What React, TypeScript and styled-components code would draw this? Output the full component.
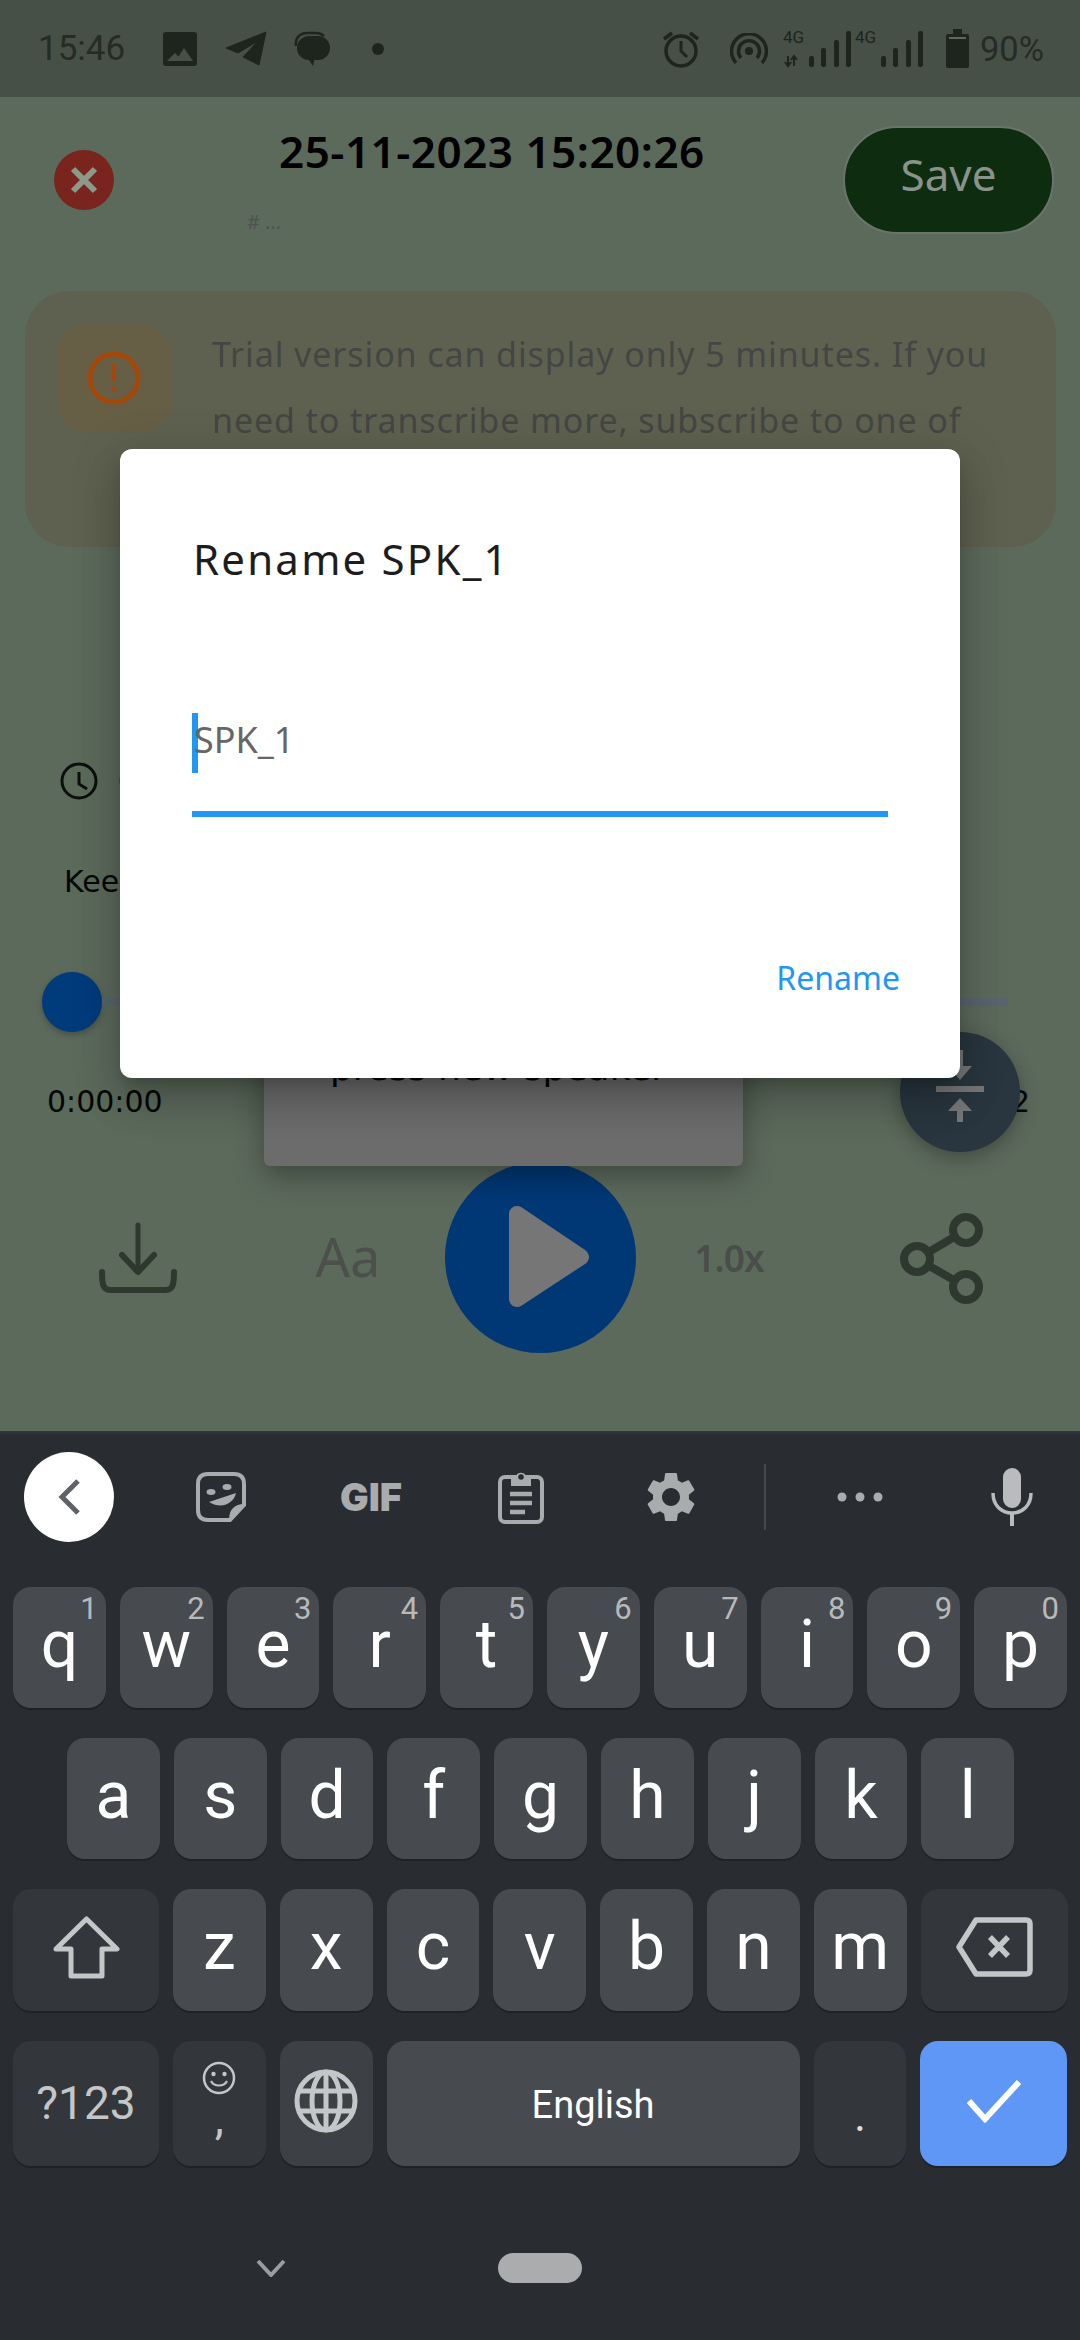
import React from 'react';
import { MdSettings } from 'react-icons/md';
import styled, { createGlobalStyle } from 'styled-components';

const APP_FONT = '"Noto Sans", "Open Sans", sans-serif';
const SYSTEM_FONT = 'Roboto, "Noto Sans", sans-serif';
const PLAIN_FONT = '"DejaVu Sans", sans-serif';
const STATUS_INK = '#1e241e';
const TOOL_INK = '#a9abad';
const KEY_INK = '#c5c6c7';
const CONTROL_INK = '#2f382f';

const ROW_ONE: [string, string][] = [
  ['q', '1'],
  ['w', '2'],
  ['e', '3'],
  ['r', '4'],
  ['t', '5'],
  ['y', '6'],
  ['u', '7'],
  ['i', '8'],
  ['o', '9'],
  ['p', '0'],
];
const ROW_TWO = ['a', 's', 'd', 'f', 'g', 'h', 'j', 'k', 'l'];
const ROW_THREE = ['z', 'x', 'c', 'v', 'b', 'n', 'm'];

function CellSignal({ activity }: { activity?: boolean }) {
  return (
    <svg width="70" height="42" viewBox="0 0 70 42">
      <text x="1" y="15" fontFamily="Roboto, sans-serif" fontSize="17" fill={STATUS_INK}>
        4G
      </text>
      {activity && (
        <path d="M6 28v9M3 34l3 4 3-4M12 38v-9M9 32l3-4 3 4" stroke={STATUS_INK} strokeWidth="2" fill="none" />
      )}
      <rect x="27" y="28" width="5" height="11" rx="2" fill={STATUS_INK} />
      <rect x="39" y="20" width="5" height="19" rx="2" fill={STATUS_INK} />
      <rect x="52" y="12" width="5" height="27" rx="2" fill={STATUS_INK} />
      <rect x="64" y="3" width="5" height="36" rx="2" fill={STATUS_INK} />
    </svg>
  );
}

export default function App(): JSX.Element {
  return (
    <Screen>
      <GlobalStyle />
      <StatusBar>
        <StatusGroup>
          <Clock>15:46</Clock>
          <svg width="34" height="34" viewBox="0 0 34 34" style={{ marginLeft: 38 }}>
            <rect width="34" height="34" rx="3" fill={STATUS_INK} />
            <path d="M4 29l8-8 3.5 3.5L21 16l9 13z" fill="#475047" />
          </svg>
          <svg width="42" height="35" viewBox="0 0 42 35" style={{ marginLeft: 28 }}>
            <path d="M41 1L1 17l12 5 20-12-15 16 16 8z" fill={STATUS_INK} stroke={STATUS_INK} strokeLinejoin="round" />
          </svg>
          <svg width="36" height="35" viewBox="0 0 36 35" style={{ marginLeft: 27 }}>
            <path d="M2 15C1 6 6 2 14 2h8c3 0 6 1 8 3" fill="none" stroke={STATUS_INK} strokeWidth="2.5" />
            <rect x="3" y="5" width="33" height="24" rx="12" fill={STATUS_INK} />
            <path d="M13 26l6 9 2-9z" fill={STATUS_INK} />
          </svg>
          <StatusDot />
        </StatusGroup>
        <StatusGroup>
          <svg width="38" height="38" viewBox="0 0 38 38">
            <circle cx="19" cy="21" r="15" fill="none" stroke={STATUS_INK} strokeWidth="3.5" />
            <path d="M19 11v10l6 6" fill="none" stroke={STATUS_INK} strokeWidth="3" />
            <path d="M2 9l8-6M36 9l-8-6" fill="none" stroke={STATUS_INK} strokeWidth="3.5" />
          </svg>
          <svg width="38" height="31" viewBox="0 0 38 31" style={{ marginLeft: 30 }}>
            <circle cx="19" cy="18" r="4" fill={STATUS_INK} />
            <path d="M11 25a10.500 10.500 0 1 1 16 0" fill="none" stroke={STATUS_INK} strokeWidth="3.500" />
            <path d="M6 30a17.500 17.500 0 1 1 26 0" fill="none" stroke={STATUS_INK} strokeWidth="3.500" />
          </svg>
          <SignalSlot $gap={14}>
            <CellSignal activity />
          </SignalSlot>
          <SignalSlot $gap={2}>
            <CellSignal />
          </SignalSlot>
          <svg width="23" height="39" viewBox="0 0 23 39" style={{ marginLeft: 22 }}>
            <path d="M7 0h9v5h5a2 2 0 0 1 2 2v30a2 2 0 0 1-2 2H2a2 2 0 0 1-2-2V7a2 2 0 0 1 2-2h5z" fill={STATUS_INK} />
            <rect x="3" y="8" width="17" height="2" fill="#5f685f" />
          </svg>
          <Battery>90%</Battery>
        </StatusGroup>
      </StatusBar>

      <Body>
        <Header>
          <CloseButton>
            <svg width="28" height="28" viewBox="0 0 28 28">
              <path d="M3 3l22 22M25 3L3 25" stroke="#8b9a8c" strokeWidth="6" />
            </svg>
          </CloseButton>
          <TitleColumn>
            <Title>25-11-2023 15:20:26</Title>
            <Subtitle># ...</Subtitle>
          </TitleColumn>
          <SaveButton>Save</SaveButton>
        </Header>

        <TrialCard>
          <TrialIcon>
            <svg width="54" height="54" viewBox="0 0 54 54">
              <circle cx="27" cy="27" r="24" fill="none" stroke="#a3480a" strokeWidth="5" />
              <path d="M27 13v17" stroke="#a3480a" strokeWidth="4" />
              <circle cx="27" cy="38" r="2.500" fill="#a3480a" />
            </svg>
          </TrialIcon>
          <TrialText>
            Trial version can display only 5 minutes. If you
            <br />
            need to transcribe more, subscribe to one of
          </TrialText>
        </TrialCard>

        <ClockRow>
          <svg width="38" height="38" viewBox="0 0 38 38">
            <circle cx="19" cy="19" r="17" fill="none" stroke="#0c0f0c" strokeWidth="3" />
            <path d="M19 10v12l8 5" fill="none" stroke="#0c0f0c" strokeWidth="3" />
          </svg>
          <ClockLabel>C</ClockLabel>
        </ClockRow>
        <KeepLine>Kee</KeepLine>

        <SliderRow>
          <SliderThumb />
          <SliderTrack />
        </SliderRow>
        <TimeRow>
          <span>0:00:00</span>
          <span>2</span>
        </TimeRow>

        <Controls>
          <ControlSlot>
            <svg width="80" height="72" viewBox="0 0 80 72">
              <path d="M40 3v45" fill="none" stroke={CONTROL_INK} strokeWidth="5" strokeLinecap="round" />
              <path d="M24 33l16 17 16-17" fill="none" stroke={CONTROL_INK} strokeWidth="6" strokeLinecap="round" strokeLinejoin="round" />
              <path d="M4 50c0 12 1 18 8 18h56c7 0 8-6 8-18" fill="none" stroke={CONTROL_INK} strokeWidth="6" strokeLinecap="round" />
            </svg>
          </ControlSlot>
          <ControlSlot>
            <FontLabel>Aa</FontLabel>
          </ControlSlot>
          <ControlSlot>
            <PlayButton>
              <svg width="191" height="191" viewBox="0 0 191 191">
                <path d="M72 52l64 43-64 42z" fill="#767676" stroke="#767676" strokeWidth="16" strokeLinejoin="round" />
              </svg>
            </PlayButton>
          </ControlSlot>
          <ControlSlot>
            <SpeedLabel>1.0x</SpeedLabel>
          </ControlSlot>
          <ControlSlot>
            <svg width="84" height="92" viewBox="0 0 84 92">
              <path d="M66 18L17 47l49 28" fill="none" stroke={CONTROL_INK} strokeWidth="8" />
              <circle cx="66" cy="18" r="13" fill="#5c6a5c" stroke={CONTROL_INK} strokeWidth="8" />
              <circle cx="17" cy="47" r="13" fill="#5c6a5c" stroke={CONTROL_INK} strokeWidth="8" />
              <circle cx="66" cy="75" r="13" fill="#5c6a5c" stroke={CONTROL_INK} strokeWidth="8" />
            </svg>
          </ControlSlot>
        </Controls>

        <MergeFab>
          <svg width="48" height="84" viewBox="0 0 48 84">
            <path d="M21 0h6v16h9L24 30 12 16h9z" fill="#777" />
            <rect y="36" width="48" height="6" fill="#777" />
            <path d="M24 48l12 13h-9v11h-6V61h-9z" fill="#777" />
          </svg>
        </MergeFab>

        <Toast>press new speaker</Toast>

        <Dialog>
          <DialogTitle>Rename SPK_1</DialogTitle>
          <Field>
            <Caret />
            <FieldValue>SPK_1</FieldValue>
          </Field>
          <DialogAction>Rename</DialogAction>
        </Dialog>
      </Body>

      <Keyboard>
        <Toolbar>
          <BackButton>
            <svg width="24" height="36" viewBox="0 0 24 36">
              <path d="M21 2L5 18l16 16" fill="none" stroke="#5f6368" strokeWidth="5" />
            </svg>
          </BackButton>
          <ToolSlot $first>
            <svg width="50" height="50" viewBox="0 0 50 50">
              <path d="M12 2h26q10 0 10 10v21L34 48H12Q2 48 2 38V12Q2 2 12 2z" fill="none" stroke={TOOL_INK} strokeWidth="4" />
              <path d="M48 32c-9 0-15 5-15 16z" fill={TOOL_INK} />
              <ellipse cx="15" cy="20" rx="4.500" ry="3" fill={TOOL_INK} />
              <ellipse cx="31" cy="15" rx="4.500" ry="3" fill={TOOL_INK} />
              <path d="M13 30l27-9c-2 10-14 17-27 9z" fill={TOOL_INK} />
            </svg>
          </ToolSlot>
          <ToolSlot>
            <GifLabel>GIF</GifLabel>
          </ToolSlot>
          <ToolSlot>
            <svg width="46" height="54" viewBox="0 0 46 54">
              <rect x="2" y="7" width="42" height="45" rx="5" fill="none" stroke={TOOL_INK} strokeWidth="4" />
              <path d="M13 6h5a5.500 5.500 0 0 1 10 0h5v10H13z" fill={TOOL_INK} />
              <circle cx="23" cy="7" r="2.800" fill="#292d31" />
              <path d="M12 24h22M12 33h22M12 42h15" stroke={TOOL_INK} strokeWidth="4.500" />
            </svg>
          </ToolSlot>
          <ToolSlot>
            <MdSettings size={60} color={TOOL_INK} />
          </ToolSlot>
          <ToolDivider />
          <ToolEnd>
            <svg width="46" height="10" viewBox="0 0 46 10">
              <circle cx="5" cy="5" r="4.500" fill={TOOL_INK} />
              <circle cx="23" cy="5" r="4.500" fill={TOOL_INK} />
              <circle cx="41" cy="5" r="4.500" fill={TOOL_INK} />
            </svg>
          </ToolEnd>
          <ToolEnd>
            <svg width="42" height="58" viewBox="0 0 42 58">
              <rect x="12" y="0" width="18" height="40" rx="9" fill="#b9bbbd" />
              <path d="M2 25c0 12 8 20 19 20s19-8 19-20" fill="none" stroke="#b9bbbd" strokeWidth="3.500" />
              <path d="M21 45v13" stroke="#b9bbbd" strokeWidth="4" />
            </svg>
          </ToolEnd>
        </Toolbar>

        <KeyRows>
          <KeyRow $height={121}>
            {ROW_ONE.map(([letter, digit]) => (
              <Key key={letter}>
                {letter}
                <KeyHint>{digit}</KeyHint>
              </Key>
            ))}
          </KeyRow>
          <KeyRow $height={121} $inset={54}>
            {ROW_TWO.map((letter) => (
              <Key key={letter}>{letter}</Key>
            ))}
          </KeyRow>
          <KeyRow $height={122}>
            <Key $width={146} $tone="dark">
              <svg width="67" height="63" viewBox="0 0 67 63">
                <path d="M33.500 3L64 33H49v27H18V33H3z" fill="none" stroke={KEY_INK} strokeWidth="5" strokeLinejoin="round" />
              </svg>
            </Key>
            {ROW_THREE.map((letter) => (
              <Key key={letter}>{letter}</Key>
            ))}
            <Key $width={147} $tone="dark">
              <svg width="77" height="60" viewBox="0 0 77 60">
                <path d="M20 3h50q4 0 4 4v46q0 4-4 4H20L3 30z" fill="none" stroke={KEY_INK} strokeWidth="5.500" strokeLinejoin="round" />
                <path d="M34 20l18 19M52 20L34 39" stroke={KEY_INK} strokeWidth="5.500" />
              </svg>
            </Key>
          </KeyRow>
          <KeyRow $height={125}>
            <Key $width={146} $tone="dark">
              <SymbolsLabel>?123</SymbolsLabel>
            </Key>
            <Key $tone="dark">
              <CommaStack>
                <svg width="34" height="34" viewBox="0 0 34 34">
                  <circle cx="17" cy="17" r="15" fill="none" stroke={KEY_INK} strokeWidth="2.500" />
                  <circle cx="11.500" cy="13" r="2.200" fill={KEY_INK} />
                  <circle cx="22.500" cy="13" r="2.200" fill={KEY_INK} />
                  <path d="M9 20c3 6 13 6 16 0" fill="none" stroke={KEY_INK} strokeWidth="2.200" />
                </svg>
                <CommaMark>,</CommaMark>
              </CommaStack>
            </Key>
            <Key $tone="mid">
              <svg width="64" height="64" viewBox="0 0 64 64">
                <g fill="none" stroke={KEY_INK} strokeWidth="5">
                  <circle cx="32" cy="32" r="29" />
                  <ellipse cx="32" cy="32" rx="14" ry="29" />
                  <path d="M5 22h54M5 42h54M32 3v58" />
                </g>
              </svg>
            </Key>
            <Key $width={413}>
              <SpaceLabel>English</SpaceLabel>
            </Key>
            <Key $tone="dark">
              <PeriodMark>.</PeriodMark>
            </Key>
            <Key $width={147} $tone="accent">
              <svg width="56" height="44" viewBox="0 0 56 44">
                <path d="M3 22l16 18L53 3" fill="none" stroke="#fff" strokeWidth="6" />
              </svg>
            </Key>
          </KeyRow>
        </KeyRows>

        <NavBar>
          <svg width="30" height="18" viewBox="0 0 30 18">
            <path d="M2 2l13 14L28 2" fill="none" stroke="#9a9c9e" strokeWidth="4" />
          </svg>
          <HomePill />
        </NavBar>
      </Keyboard>
    </Screen>
  );
}

const GlobalStyle = createGlobalStyle`
  html, body {
    margin: 0;
    padding: 0;
    background: #292d31;
  }
`;

const Screen = styled.div`
  width: 1080px;
  height: 2340px;
  display: flex;
  flex-direction: column;
  overflow: hidden;
  font-family: ${APP_FONT};
`;

const StatusBar = styled.div`
  flex: 0 0 97px;
  display: flex;
  align-items: center;
  justify-content: space-between;
  padding: 0 36px 0 38px;
  background: #475047;
  color: #252b25;
  font-family: ${SYSTEM_FONT};
`;

const StatusGroup = styled.div`
  display: flex;
  align-items: center;
`;

const Clock = styled.span`
  width: 87px;
  font-size: 35px;
`;

const StatusDot = styled.span`
  width: 12px;
  height: 12px;
  margin-left: 42px;
  border-radius: 50%;
  background: ${STATUS_INK};
`;

const SignalSlot = styled.span<{ $gap: number }>`
  display: flex;
  margin-left: ${(p) => p.$gap}px;
`;

const Battery = styled.span`
  margin-left: 11px;
  font-size: 34.5px;
`;

const Body = styled.div`
  position: relative;
  flex: 0 0 1334px;
  display: flex;
  flex-direction: column;
  background: #5c6a5c;
`;

const Header = styled.div`
  display: flex;
  align-items: center;
  height: 108px;
  margin-top: 29px;
  padding: 0 26px 0 54px;
`;

const CloseButton = styled.div`
  width: 60px;
  height: 60px;
  display: flex;
  align-items: center;
  justify-content: center;
  border-radius: 50%;
  background: #79251e;
`;

const TitleColumn = styled.div`
  align-self: flex-start;
  margin-left: 133px;
`;

const Title = styled.div`
  margin-left: 32px;
  font-size: 44px;
  font-weight: 600;
  letter-spacing: 0.5px;
  line-height: 50px;
  white-space: nowrap;
  color: #000;
`;

const Subtitle = styled.div`
  margin-top: 34px;
  font-size: 20px;
  line-height: 24px;
  color: #4f524f;
`;

const SaveButton = styled.div`
  width: 211px;
  height: 108px;
  margin-left: auto;
  box-sizing: border-box;
  display: flex;
  align-items: center;
  justify-content: center;
  padding-bottom: 12px;
  border: 2px solid #6b746b;
  border-radius: 54px;
  background: #0d2c10;
  color: #8a938a;
  font-size: 44px;
`;

const TrialCard = styled.div`
  display: flex;
  align-items: flex-start;
  height: 256px;
  margin: 57px 24px 0 25px;
  padding: 33px 0 0 32px;
  box-sizing: border-box;
  border-radius: 44px;
  background: #5f6150;
`;

const TrialIcon = styled.div`
  width: 114px;
  height: 108px;
  display: flex;
  align-items: center;
  justify-content: center;
  border-radius: 30px;
  background: #665f46;
`;

const TrialText = styled.div`
  margin: -3px 0 0 41px;
  font-size: 34px;
  letter-spacing: 0.9px;
  line-height: 66px;
  color: #444644;
  white-space: nowrap;
`;

const ClockRow = styled.div`
  display: flex;
  align-items: center;
  margin-top: 215px;
  padding-left: 60px;
`;

const ClockLabel = styled.span`
  margin-left: 20px;
  font-family: ${PLAIN_FONT};
  font-size: 30px;
  color: #0c0f0c;
`;

const KeepLine = styled.div`
  margin-top: 64px;
  padding-left: 64px;
  font-family: ${PLAIN_FONT};
  font-size: 30px;
  line-height: 36px;
  color: #050705;
`;

const SliderRow = styled.div`
  display: flex;
  align-items: center;
  height: 60px;
  margin-top: 72px;
  padding-left: 42px;
`;

const SliderThumb = styled.div`
  width: 60px;
  height: 60px;
  border-radius: 50%;
  background: #003b7c;
  box-shadow: 0 3px 6px rgba(0, 0, 0, 0.25);
`;

const SliderTrack = styled.div`
  width: 906px;
  height: 8px;
  background: #58646e;
`;

const TimeRow = styled.div`
  display: flex;
  justify-content: space-between;
  margin-top: 52px;
  padding: 0 50px 0 47px;
  font-family: ${PLAIN_FONT};
  font-size: 30px;
  line-height: 36px;
  color: #050705;
`;

const Controls = styled.div`
  display: grid;
  grid-template-columns: 200px 220px 164px 214px 212px;
  height: 191px;
  margin-top: 42px;
  padding-left: 38px;
`;

const ControlSlot = styled.div`
  display: flex;
  align-items: center;
  justify-content: center;
`;

const PlayButton = styled.div`
  flex: 0 0 191px;
  height: 191px;
  border-radius: 50%;
  background: #003876;
`;

const FontLabel = styled.span`
  margin-top: -4px;
  font-size: 54px;
  color: #4c4f4c;
`;

const SpeedLabel = styled.span`
  font-size: 37px;
  font-weight: 600;
  letter-spacing: -1px;
  color: #4a4d4a;
`;

const MergeFab = styled.div`
  position: absolute;
  left: 900px;
  top: 935px;
  width: 120px;
  height: 120px;
  display: flex;
  align-items: center;
  justify-content: center;
  border-radius: 50%;
  background: #29363f;
  box-shadow: 0 6px 20px rgba(0, 0, 0, 0.3);
`;

const Toast = styled.div`
  position: absolute;
  left: 264px;
  top: 903px;
  width: 479px;
  height: 166px;
  box-sizing: border-box;
  padding: 48px 0 0 66px;
  border-radius: 6px;
  background: #6c6c6c;
  box-shadow: 0 10px 30px rgba(0, 0, 0, 0.35);
  font-family: ${PLAIN_FONT};
  font-size: 36px;
  line-height: 40px;
  color: #050505;
`;

const Dialog = styled.div`
  position: absolute;
  left: 120px;
  top: 352px;
  width: 840px;
  height: 629px;
  box-sizing: border-box;
  display: flex;
  flex-direction: column;
  padding: 85px 72px 0 72px;
  border-radius: 12px;
  background: #fff;
  box-shadow: 0 11px 15px -7px rgba(0, 0, 0, 0.2), 0 24px 38px 3px rgba(0, 0, 0, 0.14),
    0 9px 46px 8px rgba(0, 0, 0, 0.12);
`;

const DialogTitle = styled.div`
  margin-left: 1px;
  font-size: 42px;
  letter-spacing: 2.2px;
  line-height: 50px;
  color: #1d1d1d;
`;

const Field = styled.div`
  display: flex;
  align-items: center;
  margin-top: 129px;
  padding-bottom: 38px;
  border-bottom: 6px solid #2196f3;
`;

const Caret = styled.span`
  flex: 0 0 6px;
  height: 60px;
  background: #2196f3;
`;

const FieldValue = styled.span`
  margin: -8px 0 0 -4px;
  font-size: 36px;
  color: #666;
`;

const DialogAction = styled.div`
  align-self: flex-end;
  margin: 141px -12px 0 0;
  font-size: 32px;
  line-height: 40px;
  color: #2196f3;
`;

const Keyboard = styled.div`
  flex: 1;
  display: flex;
  flex-direction: column;
  border-top: 3px solid #303539;
  background: #292d31;
  font-family: ${SYSTEM_FONT};
`;

const Toolbar = styled.div`
  display: flex;
  align-items: center;
  height: 126px;
  margin-bottom: 27px;
  padding-left: 24px;
`;

const BackButton = styled.div`
  flex: 0 0 90px;
  height: 90px;
  display: flex;
  align-items: center;
  justify-content: center;
  border-radius: 50%;
  background: #fff;
`;

const ToolSlot = styled.div<{ $first?: boolean }>`
  flex: 0 0 150px;
  display: flex;
  justify-content: center;
  margin-left: ${(p) => (p.$first ? 32 : 0)}px;
`;

const GifLabel = styled.span`
  font-family: Inter, Roboto, sans-serif;
  font-size: 38px;
  font-weight: 900;
  line-height: 40px;
  color: ${TOOL_INK};
`;

const ToolDivider = styled.span`
  flex: 0 0 2px;
  height: 66px;
  margin: 0 19px 0 18px;
  background: #44484c;
`;

const ToolEnd = styled.div`
  flex: 0 0 150px;
  display: flex;
  justify-content: center;
  margin-right: 2px;
`;

const KeyRows = styled.div`
  display: flex;
  flex-direction: column;
  gap: 30px;
  padding: 0 13px;
`;

const KeyRow = styled.div<{ $height: number; $inset?: number }>`
  display: flex;
  gap: 14px;
  height: ${(p) => p.$height}px;
  padding-left: ${(p) => p.$inset ?? 0}px;
`;

const KEY_TONES = {
  light: '#474b4f',
  mid: '#3d4145',
  dark: '#33373b',
  accent: '#5e97f6',
};

const Key = styled.div<{ $width?: number; $tone?: keyof typeof KEY_TONES }>`
  position: relative;
  flex: 0 0 ${(p) => p.$width ?? 92.8}px;
  display: flex;
  align-items: center;
  justify-content: center;
  padding-bottom: 6px;
  box-sizing: border-box;
  border-radius: 18px;
  background: ${(p) => KEY_TONES[p.$tone ?? 'light']};
  box-shadow: 0 2px 0 #1f2225;
  color: #fff;
  font-size: 66px;
  line-height: 1;
`;

const KeyHint = styled.span`
  position: absolute;
  top: 6px;
  right: 8px;
  font-size: 31px;
  line-height: 31px;
  color: #b8b9ba;
`;

const SymbolsLabel = styled.span`
  padding-top: 4px;
  font-size: 46px;
  color: ${KEY_INK};
`;

const CommaStack = styled.div`
  display: flex;
  flex-direction: column;
  align-items: center;
`;

const CommaMark = styled.span`
  height: 46px;
  font-size: 46px;
  line-height: 46px;
  color: ${KEY_INK};
`;

const SpaceLabel = styled.span`
  padding-top: 8px;
  font-size: 38px;
`;

const PeriodMark = styled.span`
  padding-top: 28px;
  font-size: 46px;
  color: #ddd;
`;

const NavBar = styled.div`
  display: flex;
  align-items: center;
  gap: 212px;
  height: 30px;
  margin-top: 87px;
  padding-left: 256px;
`;

const HomePill = styled.span`
  width: 84px;
  height: 30px;
  border-radius: 15px;
  background: #aaacae;
`;
